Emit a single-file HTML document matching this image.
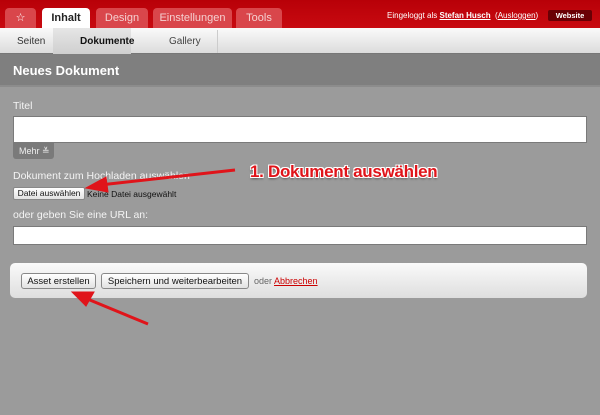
<!DOCTYPE html>
<html><head><meta charset="utf-8"><style>
*{margin:0;padding:0;box-sizing:border-box}
body{width:600px;height:415px;overflow:hidden;background:#9b9b9b;font-family:"Liberation Sans","DejaVu Sans",sans-serif;position:relative}
.abs{position:absolute}
.top{left:0;top:0;width:600px;height:28px;background:linear-gradient(#b80008,#c80a10)}
.tab{top:8px;height:20px;background:#d9464b;color:#f5d0d0;font-size:11px;text-align:center;line-height:20px;border-radius:4px 4px 0 0}
.sub{left:0;top:28px;width:600px;height:26px;background:linear-gradient(#fafafa,#dcdcdc);border-bottom:1px solid #777}
.hdr{left:0;top:54px;width:600px;height:33px;background:#7f7f7f;border-bottom:2px solid #8c8c8c;color:#fff;font-weight:bold;font-size:13px;padding:9px 0 0 13px}
.lbl{color:#f4f4f4;font-size:10.5px}
.inp{background:#fff;border:1px solid #7a7a7a}
.btn{background:linear-gradient(#fff,#e2e2e2);border:1px solid #888;border-radius:3px;font-size:9.5px;color:#111;text-align:center}
</style></head><body>
<div class="abs top"></div>
<div class="abs tab" style="left:5px;width:31px;color:#fff">☆</div>
<div class="abs tab" style="left:42px;width:48px;background:#fff;color:#222;font-weight:bold">Inhalt</div>
<div class="abs tab" style="left:96px;width:52px">Design</div>
<div class="abs tab" style="left:153px;width:79px">Einstellungen</div>
<div class="abs tab" style="left:236px;width:46px">Tools</div>
<div class="abs" style="left:387px;top:11px;font-size:8px;color:#fff">Eingeloggt als <u style="font-weight:bold">Stefan Husch</u> &nbsp;(<u>Ausloggen</u>)</div>
<div class="abs" style="left:548px;top:10px;width:44px;height:11px;background:#6a0005;border-radius:2px;color:#fff;font-size:7.5px;font-weight:bold;text-align:center;line-height:11px">Website</div>
<div class="abs sub"></div>
<div class="abs" style="left:53px;top:28px;width:78px;height:26px;background:linear-gradient(#e6e6e6,#cfcfcf)"></div>
<div class="abs" style="left:217px;top:30px;width:1px;height:23px;background:#ccc"></div>
<div class="abs" style="left:17px;top:36px;font-size:10px;color:#333">Seiten</div>
<div class="abs" style="left:80px;top:36px;font-size:10px;color:#111;font-weight:bold">Dokumente</div>
<div class="abs" style="left:169px;top:36px;font-size:10px;color:#444">Gallery</div>
<div class="abs hdr">Neues Dokument</div>
<div class="abs lbl" style="left:13px;top:100px">Titel</div>
<div class="abs inp" style="left:13px;top:116px;width:574px;height:27px"></div>
<div class="abs" style="left:13px;top:143px;width:41px;height:16px;background:#7a7a7a;border-radius:0 0 3px 3px;color:#eee;font-size:9px;line-height:16px;padding-left:6px">Mehr ≚</div>
<div class="abs lbl" style="left:13px;top:170px">Dokument zum Hochladen auswählen</div>
<div class="abs btn" style="left:13px;top:187px;width:72px;height:13px;line-height:11px;font-size:8.5px;border-radius:2px">Datei auswählen</div>
<div class="abs" style="left:87px;top:189px;font-size:8.5px;color:#111">Keine Datei ausgewählt</div>
<div class="abs lbl" style="left:13px;top:209px">oder geben Sie eine URL an:</div>
<div class="abs inp" style="left:13px;top:226px;width:574px;height:19px"></div>
<div class="abs" style="left:10px;top:263px;width:577px;height:35px;background:linear-gradient(#fafafa,#dedede);border-radius:5px"></div>
<div class="abs btn" style="left:21px;top:273px;width:75px;height:16px;line-height:15px">Asset erstellen</div>
<div class="abs btn" style="left:101px;top:273px;width:148px;height:16px;line-height:15px">Speichern und weiterbearbeiten</div>
<div class="abs" style="left:254px;top:276px;font-size:9px;color:#666">oder <u style="color:#c00">Abbrechen</u></div>
<div class="abs" style="left:250px;top:162px;font-size:17px;font-weight:bold;color:#e0141a;text-shadow:1px 1px 0 #fff,-1px -1px 0 #fff,1px -1px 0 #fff,-1px 1px 0 #fff,0 2px 2px #555;letter-spacing:-0.3px">1. Dokument auswählen</div>
<svg class="abs" style="left:0;top:0" width="600" height="415">
<g fill="#e0141a" stroke="#e0141a">
<line x1="235" y1="170" x2="100" y2="185" stroke-width="3"/>
<polygon points="86,188 106,177 108,192" stroke-width="1"/>
<line x1="148" y1="324" x2="85" y2="298" stroke-width="3"/>
<polygon points="72,292 94,292 86,306" stroke-width="1"/>
</g></svg>
</body></html>
